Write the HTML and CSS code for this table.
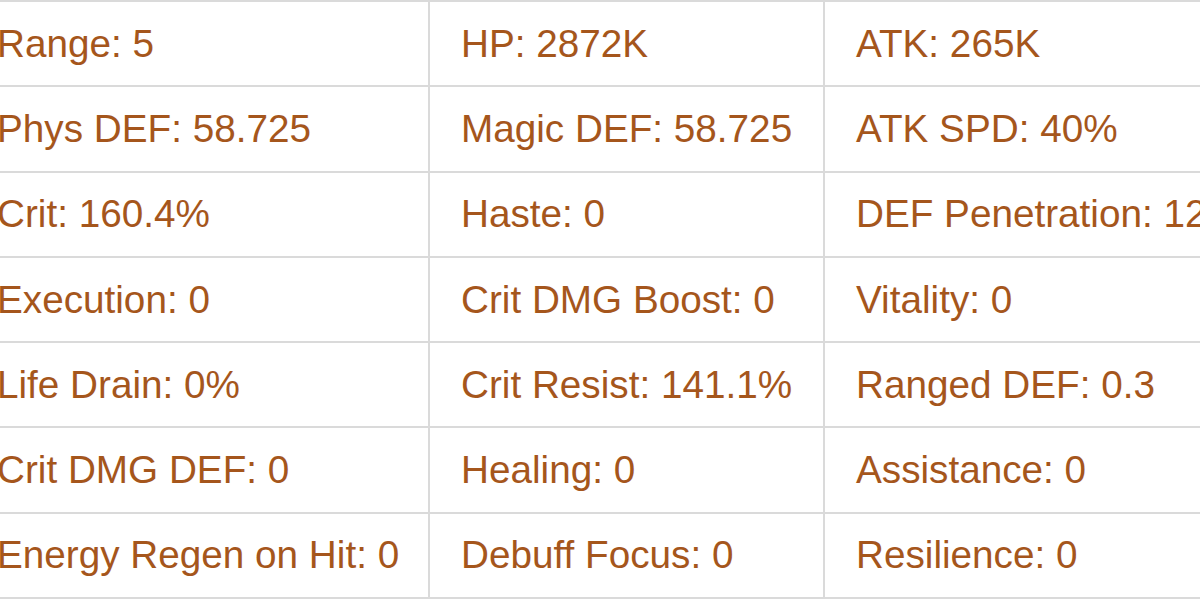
FILE: index.html
```html
<!DOCTYPE html>
<html>
<head>
<meta charset="utf-8">
<link rel="stylesheet" href="styles.css">
</head>
<body>
<div class="stats">
  <div class="cell">Range: 5</div><div class="cell">HP: 2872K</div><div class="cell">ATK: 265K</div>
  <div class="cell">Phys DEF: 58.725</div><div class="cell">Magic DEF: 58.725</div><div class="cell">ATK SPD: 40%</div>
  <div class="cell">Crit: 160.4%</div><div class="cell">Haste: 0</div><div class="cell">DEF Penetration: 12%</div>
  <div class="cell">Execution: 0</div><div class="cell">Crit DMG Boost: 0</div><div class="cell">Vitality: 0</div>
  <div class="cell">Life Drain: 0%</div><div class="cell">Crit Resist: 141.1%</div><div class="cell">Ranged DEF: 0.3</div>
  <div class="cell">Crit DMG DEF: 0</div><div class="cell">Healing: 0</div><div class="cell">Assistance: 0</div>
  <div class="cell">Energy Regen on Hit: 0</div><div class="cell">Debuff Focus: 0</div><div class="cell">Resilience: 0</div>
</div>
</body>
</html>
```

FILE: styles.css
```css
html, body {
  margin: 0;
  padding: 0;
  background: #ffffff;
  overflow: hidden;
  width: 1200px;
  height: 600px;
}
.stats {
  display: grid;
  grid-template-columns: 464px 395px 500px;
  grid-auto-rows: 85.3px;
  margin-left: -34px;
  border-top: 2px solid #dadada;
  width: 1359px;
}
.cell {
  box-sizing: border-box;
  display: flex;
  align-items: center;
  padding-left: 31px;
  border-bottom: 2px solid #dadada;
  border-right: 2px solid #dadada;
  font-family: "Liberation Sans", Arial, sans-serif;
  font-size: 38.7px;
  color: #a5561c;
  white-space: nowrap;
  overflow: hidden;
}
```
